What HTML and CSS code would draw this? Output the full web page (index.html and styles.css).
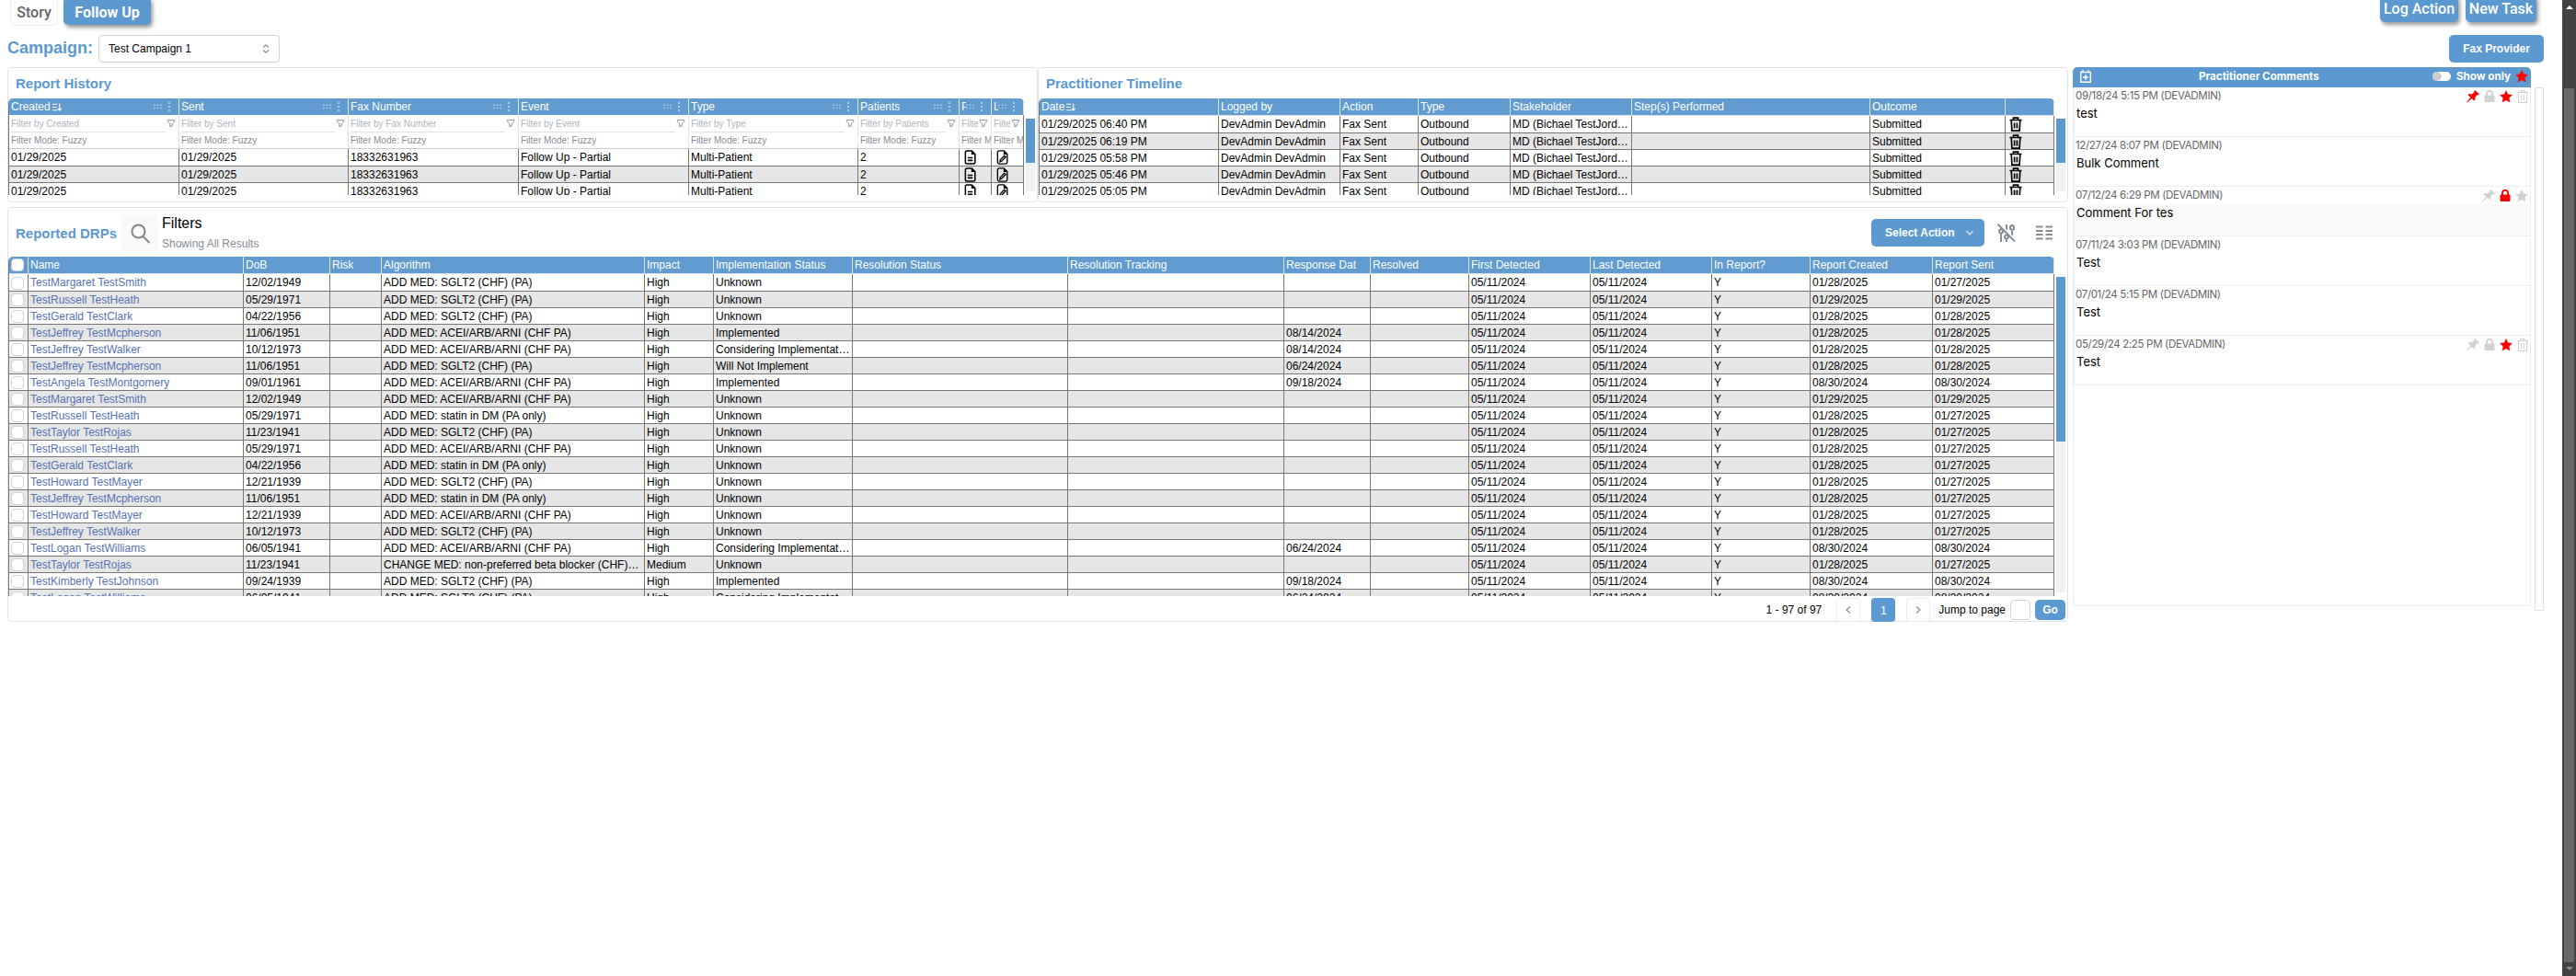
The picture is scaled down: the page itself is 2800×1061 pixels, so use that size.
FILE: index.html
```html
<!DOCTYPE html>
<html lang="en">
<head>
<meta charset="utf-8">
<title>Follow Up</title>
<link rel="stylesheet" href="styles.css">
</head>
<body>
<svg class="defs" aria-hidden="true">
  <symbol id="sort" viewBox="0 0 12 12"><path d="M1 2.500h6M1 6h5M1 9.500h6M7.200 7.500l2.300 2.300 2.300-2.300M9.500 2v7.500" fill="none" stroke="currentColor" stroke-width="1.200"/></symbol>
  <symbol id="grip" viewBox="0 0 10 6"><path d="M0 1h2M4 1h2M8 1h2M0 4.5h2M4 4.5h2M8 4.5h2" stroke="currentColor" stroke-width="1.600"/></symbol>
  <symbol id="dots" viewBox="0 0 4 10"><path d="M2 0v2M2 4v2M2 8v2" stroke="currentColor" stroke-width="2"/></symbol>
  <symbol id="funnel" viewBox="0 0 24 24"><path d="M3 4h18v2.200a2 2 0 0 1-.6 1.400L15 13v6l-6 2v-8L3.600 7.600A2 2 0 0 1 3 6.200z" fill="none" stroke="currentColor" stroke-width="2.400" stroke-linejoin="round"/></symbol>
  <symbol id="doc" viewBox="0 0 14 18"><path d="M1.200 3a2 2 0 0 1 2-2H9l4 4v10a2 2 0 0 1-2 2H3.200a2 2 0 0 1-2-2zM4 9.500h6M4 12.800h6" fill="none" stroke="currentColor" stroke-width="1.700"/><path d="M8.500 1v4.500H13z" fill="currentColor"/></symbol>
  <symbol id="docpen" viewBox="0 0 14 18"><path d="M1.200 3a2 2 0 0 1 2-2H9l4 4v10a2 2 0 0 1-2 2H3.200a2 2 0 0 1-2-2zM4 14.500l.5-2.300 5-5.200 1.600 1.600-5 5.200z" fill="none" stroke="currentColor" stroke-width="1.500"/><path d="M8.500 1v4.500H13z" fill="currentColor"/></symbol>
  <symbol id="trash" viewBox="0 0 14 16"><path d="M.5 3.500h13M4.500 3.500V1.200h5v2.300M2.200 3.500l.7 11.600h8.200l.7-11.600M5.600 6.500v6M8.400 6.500v6" fill="none" stroke="currentColor" stroke-width="1.700"/></symbol>
  <symbol id="bin" viewBox="0 0 12 14"><path d="M0 2.500h12M4 2.500V.7h4v1.800M1.500 2.500v10.800h9V2.500M4.600 5v6M7.400 5v6" fill="none" stroke="currentColor" stroke-width="1.200"/></symbol>
  <symbol id="star" viewBox="0 0 24 24"><path d="M12 1l3.300 7.200 7.700.9-5.700 5.300 1.600 7.800L12 18.400l-6.900 3.800 1.600-7.800L1 9.100l7.700-.9z" fill="currentColor" stroke="currentColor"/></symbol>
  <symbol id="lock" viewBox="0 0 12 13"><path d="M3 6V3.800a3 3 0 0 1 6 0V6" fill="none" stroke="currentColor" stroke-width="1.800"/><rect x=".5" y="5.500" width="11" height="7.500" rx="1" fill="currentColor"/></symbol>
  <symbol id="pin" viewBox="0 0 14 14"><path d="M9.200 0L14 4.600l-1.300.7-1.200-.1-2.200 2.500.1 2.600-1.300 1.200-2.500-2.600L.6 13.400l-.4-.4 4.100-5.200L1.500 5.200l1.300-1.100 2.800.3 2.800-2.200v-1.300z" fill="currentColor"/></symbol>
  <symbol id="chev" viewBox="0 0 10 10"><path d="M1.500 3l3.500 4 3.500-4" fill="none" stroke="currentColor" stroke-width="1.200"/></symbol>
</svg>

<div class="page">
  <header class="topbar">
    <nav class="tabs"><span class="tab">Story</span><span class="tab tab-on">Follow Up</span></nav>
    <div class="actions"><button class="act log">Log Action</button><button class="act task">New Task</button></div>
  </header>

  <div class="campaign">
    <label class="campaign-label">Campaign:</label>
    <div class="select"><span>Test Campaign 1</span>
      <svg width="10" height="12" viewBox="0 0 10 12"><path d="M2 4.500L5 1.800l3 2.700M2 7.500l3 2.700 3-2.700" fill="none" stroke="#868e96" stroke-width="1.200"/></svg>
    </div>
    <button class="btn fax">Fax Provider</button>
  </div>

  <div class="columns">
    <main class="left">
      <div class="pair">
        <section class="panel">
          <h2>Report History</h2>
          <div class="scroller"><div class="table history" id="history"></div><div class="bar"><i></i></div></div>
        </section>
        <section class="panel">
          <h2>Practitioner Timeline</h2>
          <div class="scroller"><div class="table timeline" id="timeline"></div><div class="bar"><i></i></div></div>
        </section>
      </div>
      <section class="panel drp">
        <div class="toolbar">
          <h2>Reported DRPs</h2>
          <span class="search"><svg width="22" height="22" viewBox="0 0 22 22"><circle cx="8.500" cy="8.500" r="7" fill="none" stroke="#868686" stroke-width="2"/><path d="M13.500 14l7 7" stroke="#868686" stroke-width="2"/></svg></span>
          <div class="filters"><b>Filters</b><span>Showing All Results</span></div>
          <button class="btn select-action">Select Action <svg width="10" height="10"><use href="#chev"/></svg></button>
          <svg class="tool" width="20" height="20" viewBox="0 0 20 20"><g fill="none" stroke="#868e96" stroke-width="2"><path d="M4 4v3M4 11v9M10 1v7M10 17v3M16 8v6M16 1v1"/><circle cx="4" cy="8.500" r="2"/><circle cx="10" cy="14.500" r="2"/><circle cx="16" cy="4.500" r="2.200"/></g><path d="M2 -.5l18 18.500" stroke="#fff" stroke-width="1.500"/><path d="M.5 .8l18.500 18.700" stroke="#868e96" stroke-width="2"/></svg>
          <svg class="tool" width="18" height="16" viewBox="0 0 18 16"><path d="M0 1.500h7.500M10.500 1.500H18M0 6h7.500M10.500 6H18M0 10h7.500M10.500 10H18M0 14.500h7.500M10.500 14.500H18" stroke="#868e96" stroke-width="2"/></svg>
        </div>
        <div class="scroller tall"><div class="table drps" id="drps"></div><div class="bar"><i></i></div></div>
        <footer class="pager">
          <span class="count">1 - 97 of 97</span>
          <button class="pg"><svg class="prev" width="10" height="10"><use href="#chev"/></svg></button>
          <button class="pg on">1</button>
          <button class="pg"><svg class="next" width="10" height="10"><use href="#chev"/></svg></button>
          <span class="jump">Jump to page</span><span class="num"></span><button class="btn go">Go</button>
        </footer>
      </section>
    </main>

    <aside class="comments">
      <div class="comments-head">
        <svg width="12" height="14" viewBox="0 0 12 14"><path d="M.7 2.500h10.600v10.800H.7zM3 0v2.500M9 0v2.500M6 5v6M3 8h6" fill="none" stroke="#fff" stroke-width="1.400"/></svg>
        <b class="ctitle">Practitioner Comments</b>
        <span class="toggle"></span><b class="show">Show only</b>
        <svg class="red" width="14" height="14"><use href="#star"/></svg>
      </div>
      <div class="comments-list" id="comments"></div>
    </aside>
    <div class="gutter"></div>
  </div>
</div>
<div class="scrollbar"><i class="up"></i><i class="thumb"></i><i class="down"></i></div>
<script src="app.js"></script>
</body>
</html>
```
FILE: styles.css
```css
* { box-sizing: border-box; }
html, body { height: 100%; margin: 0; overflow: hidden; }
body { display: flex; background: #fff; color: #000; font: 12px "Liberation Sans", Arial, sans-serif; }
button { font: inherit; border: 0; padding: 0; margin: 0; }
svg { display: block; flex: none; }
.defs { position: absolute; width: 0; height: 0; }
.page { flex: 1; min-width: 0; padding-left: 8px; }

.topbar { display: flex; justify-content: space-between; height: 38px; padding: 0 28px 0 3px; font-family: Roboto, sans-serif; font-size: 16px; }
.tabs { display: flex; gap: 6px; margin-top: -3px; }
.tab { width: 52px; height: 31px; display: flex; align-items: center; justify-content: center; border: 1px solid #eee; border-radius: 5px; color: #666; font-weight: 500; padding-top: 2px; }
.tab-on { width: 95px; height: 30px; border: 0; background: #5c99d0; color: #fff; font-weight: 700; box-shadow: 2px 3px 4px rgba(0,0,0,.4); }
.actions { display: flex; gap: 8px; margin-top: -6px; }
.act { height: 30px; border-radius: 5px; background: #5c99d0; color: #fff; font-weight: 500; box-shadow: 2px 3px 4px rgba(0,0,0,.4); }
.log { width: 85px; }
.task { width: 77px; }

.campaign { display: flex; align-items: center; height: 30px; margin: 0 20px 5px 0; }
.campaign-label { width: 99px; color: #5c99d0; font-size: 18px; font-weight: 700; padding-bottom: 1px; }
.select { width: 197px; height: 30px; display: flex; align-items: center; justify-content: space-between; padding: 0 9px 0 10px; border: 1px solid #ced4da; border-radius: 4px; }
.btn { background: #5c99d0; color: #fff; border-radius: 5px; font-weight: 700; }
.fax { width: 103px; height: 30px; margin-left: auto; }

.columns { display: flex; }
.left { width: 2240px; }
.pair { display: flex; height: 147px; margin-bottom: 5px; }
.panel { width: 1120px; border: 1px solid #dee2e6; border-radius: 5px; }
.drp { width: 2240px; height: 451px; }
h2 { margin: 0; color: #5c99d0; font-size: 15px; line-height: 17px; }
.pair h2 { height: 33px; padding: 8px 0 0 8px; }

.scroller { display: flex; height: 105px; overflow: hidden; }
.table { flex: none; border-left: 1px solid #777; border-radius: 5px 5px 0 0; overflow: hidden; }
.bar { width: 10px; height: 79px; margin: 22px 0 0 2px; background: #f1f1f1; }
.bar i { display: block; height: 48px; background: #5c99d0; }
.tall { height: 369px; }
.tall .bar { height: 343px; }
.tall .bar i { height: 179px; }

.row { display: grid; }
.history .row { grid-template-columns: 185px 184px 185px 185px 184px 110px 35px 35px; }
.timeline .row { grid-template-columns: 195px 132px 85px 100px 132px 259px 147px 53px; }
.drps .row { grid-template-columns: 21px 234px 94px 56px 286px 75px 151px 234px 235px 94px 107px 132px 132px 107px 133px 132px; }
.cell { height: 18px; padding: 0 2px; border-right: 1px solid #777; border-bottom: 1px solid #777; line-height: 18px; white-space: nowrap; overflow: hidden; text-overflow: ellipsis; }
.alt .cell { background: #e6e6e6; }
.row.first .cell { height: 19px; }
.row.head .cell { height: 18px; display: flex; align-items: center; padding-right: 4px; background: #619bd0; color: #fff; border-color: #dee2e6; border-bottom: 0; text-overflow: clip; }
.timeline .head, .drps .head { border-bottom: 1px solid #dee2e6; }
.head span { min-width: 0; overflow: hidden; }
.head .ctl { display: flex; flex: none; align-items: center; gap: 6px; margin-left: auto; padding-right: 4px; color: #a9c9e8; }
.filter { height: 37px; padding: 0 0 0 2px; border-right: 1px solid #dee2e6; border-bottom: 1px solid #ccc; overflow: hidden; font-size: 10px; color: #868e96; white-space: nowrap; }
.filter:last-child { border-right-color: #777; }
.ask { display: flex; align-items: center; height: 19px; color: #adb5bd; }
.ask span { flex: 1; min-width: 0; height: 19px; line-height: 19px; border-bottom: 1px solid #dee2e6; overflow: hidden; }
.ask svg { margin: 0 3px 1px 1px; color: #868e96; }
.mode { line-height: 17px; overflow: hidden; }
.name { color: #5673b4; }
.check { display: block; width: 14px; height: 14px; margin-top: 2px; border: 1px solid #ced4da; border-radius: 4px; background: #fff; }
.first .check { margin-top: 3px; }
.head .check { margin-top: 0; }
.cell > svg { margin: 1px 0 0 2px; }
.cell > .file { margin-left: 3px; }
.cell > .sort { margin: 1px 0 0 1px; }

.toolbar { display: flex; align-items: center; height: 53px; padding-left: 8px; }
.toolbar h2 { width: 115px; padding-top: 1px; }
.search { width: 40px; height: 40px; display: flex; align-items: center; justify-content: center; padding: 2px 0 0 2px; background: #f8f9fa; border-radius: 4px; }
.filters { display: flex; flex-direction: column; gap: 5px; margin: 1px auto 0 4px; color: #868e96; line-height: 16px; }
.filters b { color: #000; font-size: 16px; font-weight: 400; line-height: 18px; }
.select-action { display: flex; align-items: center; justify-content: space-between; width: 123px; height: 30px; padding: 0 11px 0 15px; margin: 1px 14px 0 0; }
.select-action svg { opacity: .8; }
.tool { margin: 1px 22px 0 0; }
.tool + .tool { margin-right: 16px; }

.pager { display: flex; align-items: center; justify-content: flex-end; height: 28px; padding: 2px 2px 0 0; }
.count { margin-right: 16px; }
.pg { width: 26px; height: 26px; display: flex; align-items: center; justify-content: center; margin-right: 12px; border: 1px solid #eee; border-radius: 4px; background: #fff; color: #868e96; }
.pg.on { background: #5c99d0; border: 0; color: #fff; font-size: 13px; }
.prev { transform: rotate(90deg); }
.next { transform: rotate(-90deg); }
.jump { margin: 0 5px 0 -3px; }
.num { width: 22px; height: 22px; border: 1px solid #ced4da; border-radius: 4px; margin-right: 5px; }
.go { width: 33px; height: 22px; }

.comments { width: 498px; height: 586px; margin-left: 5px; font-family: Inter, sans-serif; }
.comments-head { display: flex; align-items: center; height: 22px; padding: 0 3px 2px 8px; background: #5c99d0; border-radius: 5px 5px 0 0; color: #fff; font-size: 12px; }
.ctitle { margin-left: 117px; width: 134px; font-size: 11.6px; white-space: nowrap; }
.toggle { width: 20px; height: 10px; margin: 0 6px 0 auto; border-radius: 5px; background: radial-gradient(circle at 5px 5px, #ccc 4.5px, #fff 5px); }
.show { width: 61px; margin-right: 3px; font-size: 11.6px; white-space: nowrap; }
.red { color: red; }
.comments-list { height: 564px; border: 1px solid #eee; border-top: 0; }
.comment { height: 54px; border-left: 1px solid #eee; border-bottom: 1px solid #eee; }
.comment-top { display: flex; justify-content: space-between; height: 19px; padding-left: 1px; color: #666; font-size: 11.5px; letter-spacing: -.33px; line-height: 19px; white-space: nowrap; }
.comment-icons { display: flex; align-items: center; gap: 5px; padding-right: 2px; color: #d2d2d2; }
.comment-body { height: 34px; padding-left: 2px; font-size: 13px; line-height: 19px; }
.shaded .comment-body { background: #f9f9f9; }
.gutter { width: 10px; height: 569px; margin: 22px 0 0 4px; border: 1px solid #e0e0e0; }

.scrollbar { position: relative; flex: none; width: 15px; background: #424242; }
.scrollbar .thumb { position: absolute; left: 2px; right: 2px; top: 96px; bottom: 15px; background: #686868; }
.up, .down { position: absolute; left: 4px; border: 4px solid transparent; }
.up { top: 2px; border-bottom-color: #fff; }
.down { bottom: 2px; border-top-color: #888; }
```
FILE: app.js
```js
const icon = (id, w, h, cls = '') => `<svg class="${cls}" width="${w}" height="${h}"><use href="#${id}"/></svg>`;
const row = (cells, cls = '') => `<div class="row ${cls}">${cells.map(c => `<div class="cell">${c}</div>`).join('')}</div>`;
const stripe = i => i === 0 ? 'first' : i % 2 ? 'alt' : '';
const sort = icon('sort', 11, 11, 'sort');
const ctl = `<span class="ctl">${icon('grip', 9, 6)}${icon('dots', 4, 10)}</span>`;

const names = ['Created', 'Sent', 'Fax Number', 'Event', 'Type', 'Patients', 'P', 'L'];
let html = row(names.map((n, i) => `<span>${n}</span>${i ? '' : sort}${ctl}`), 'head');
html += '<div class="row">' + names.map(n =>
  `<div class="filter"><div class="ask"><span>Filter by ${n}</span>${icon('funnel', 10, 10)}</div><div class="mode">Filter Mode: Fuzzy</div></div>`).join('') + '</div>';
for (let i = 0; i < 3; i++) {
  html += row(['01/29/2025', '01/29/2025', '18332631963', 'Follow Up - Partial', 'Multi-Patient', '2', icon('doc', 13, 16, 'file'), icon('docpen', 13, 16, 'file')], stripe(i));
}
document.getElementById('history').innerHTML = html;

html = row(['Date' + sort, 'Logged by', 'Action', 'Type', 'Stakeholder', 'Step(s) Performed', 'Outcome', ''], 'head');
['06:40', '06:19', '05:58', '05:46', '05:05'].forEach((t, i) => {
  html += row([`01/29/2025 ${t} PM`, 'DevAdmin DevAdmin', 'Fax Sent', 'Outbound', 'MD (Bichael TestJordan)', '', 'Submitted', icon('trash', 14, 16)], stripe(i));
});
document.getElementById('timeline').innerHTML = html;

const SG = 'ADD MED: SGLT2 (CHF) (PA)', AC = 'ADD MED: ACEI/ARB/ARNI (CHF PA)', ST = 'ADD MED: statin in DM (PA only)';
const U = 'Unknown', I = 'Implemented', C = 'Considering Implementation';
const A = '01/28/2025', B = '01/27/2025', D = '01/29/2025', E = '08/30/2024';
const drps = [
  ['TestMargaret TestSmith', '12/02/1949', SG, U, '', A, B],
  ['TestRussell TestHeath', '05/29/1971', SG, U, '', D, D],
  ['TestGerald TestClark', '04/22/1956', SG, U, '', A, A],
  ['TestJeffrey TestMcpherson', '11/06/1951', AC, I, '08/14/2024', A, A],
  ['TestJeffrey TestWalker', '10/12/1973', AC, C, '08/14/2024', A, A],
  ['TestJeffrey TestMcpherson', '11/06/1951', SG, 'Will Not Implement', '06/24/2024', A, A],
  ['TestAngela TestMontgomery', '09/01/1961', AC, I, '09/18/2024', E, E],
  ['TestMargaret TestSmith', '12/02/1949', AC, U, '', D, D],
  ['TestRussell TestHeath', '05/29/1971', ST, U, '', A, B],
  ['TestTaylor TestRojas', '11/23/1941', SG, U, '', A, B],
  ['TestRussell TestHeath', '05/29/1971', AC, U, '', A, B],
  ['TestGerald TestClark', '04/22/1956', ST, U, '', A, B],
  ['TestHoward TestMayer', '12/21/1939', SG, U, '', A, B],
  ['TestJeffrey TestMcpherson', '11/06/1951', ST, U, '', A, B],
  ['TestHoward TestMayer', '12/21/1939', AC, U, '', A, B],
  ['TestJeffrey TestWalker', '10/12/1973', SG, U, '', A, B],
  ['TestLogan TestWilliams', '06/05/1941', AC, C, '06/24/2024', E, E],
  ['TestTaylor TestRojas', '11/23/1941', 'CHANGE MED: non-preferred beta blocker (CHF)(PA)', U, '', A, B],
  ['TestKimberly TestJohnson', '09/24/1939', SG, I, '09/18/2024', E, E],
  ['TestLogan TestWilliams', '06/05/1941', SG, C, '06/24/2024', E, E]
];
const check = '<i class="check"></i>';
html = row([check, 'Name', 'DoB', 'Risk', 'Algorithm', 'Impact', 'Implementation Status', 'Resolution Status', 'Resolution Tracking',
  'Response Dat', 'Resolved', 'First Detected', 'Last Detected', 'In Report?', 'Report Created', 'Report Sent'], 'head');
drps.forEach(([name, dob, alg, status, resp, created, sent], i) => {
  html += row([check, `<span class="name">${name}</span>`, dob, '', alg, alg.startsWith('CHANGE') ? 'Medium' : 'High', status, '', '', resp, '',
    '05/11/2024', '05/11/2024', 'Y', created, sent], stripe(i));
});
document.getElementById('drps').innerHTML = html;

const pin = c => icon('pin', 14, 14, c), lock = c => icon('lock', 12, 13, c), star = c => icon('star', 14, 14, c), bin = icon('bin', 12, 14);
const comments = [
  ['09/18/24 5:15 PM', 'test', pin('red') + lock('') + star('red') + bin],
  ['12/27/24 8:07 PM', 'Bulk Comment', ''],
  ['07/12/24 6:29 PM', 'Comment For tes', pin('') + lock('red') + star(''), 'shaded'],
  ['07/11/24 3:03 PM', 'Test', ''],
  ['07/01/24 5:15 PM', 'Test', ''],
  ['05/29/24 2:25 PM', 'Test', pin('') + lock('') + star('red') + bin]
];
document.getElementById('comments').innerHTML = comments.map(([when, text, icons, cls = '']) =>
  `<article class="comment ${cls}"><div class="comment-top"><span>${when} (DEVADMIN)</span><span class="comment-icons">${icons}</span></div><div class="comment-body">${text}</div></article>`).join('');
```
